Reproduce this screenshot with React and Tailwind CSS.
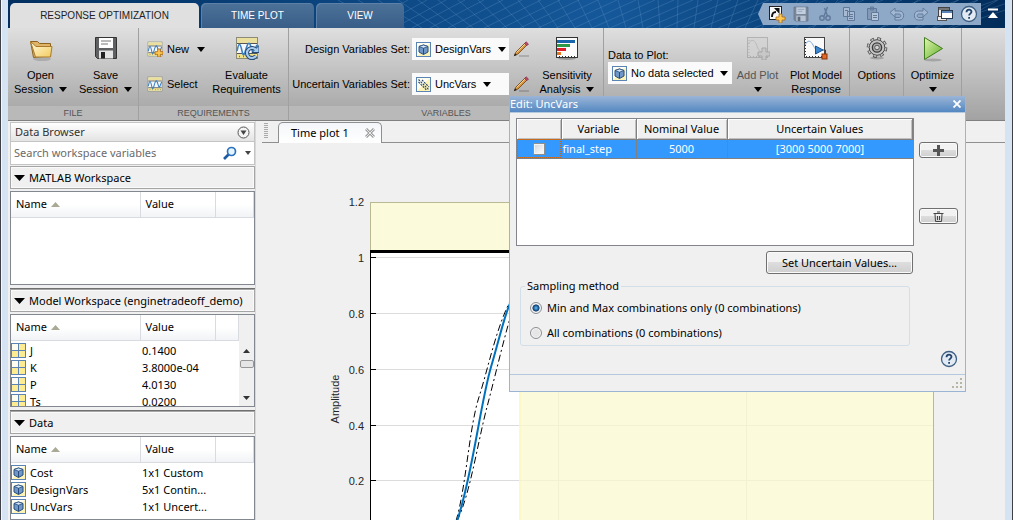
import React, { useState } from "react";

const toolText = "font-['Liberation_Sans',sans-serif] text-[11px] leading-[14px] text-black";

const Caret = ({ className = "" }) => (
  <svg width="8" height="5" viewBox="0 0 8 5" className={`shrink-0 ${className}`}>
    <path d="M0 0h8L4 5z" fill="currentColor" />
  </svg>
);

/* ---------- icons ---------- */

const FolderIcon = () => (
  <svg width="24" height="28" viewBox="0 0 24 28">
    <defs>
      <linearGradient id="folder" x1="0" y1="0" x2="1" y2="1">
        <stop offset="0" stopColor="#fffbe0" />
        <stop offset="1" stopColor="#f3cb5e" />
      </linearGradient>
    </defs>
    <ellipse cx="13" cy="23" rx="9" ry="2" fill="#000" opacity=".15" />
    <path d="M1.500 5.500h7l2 2h11v12l-17 2z" fill="#e0b468" stroke="#8c6420" />
    <path d="M1.500 5.500l5.500 5h16l-1.500 10.500h-15z" fill="url(#folder)" stroke="#a97a2c" />
  </svg>
);

const FloppyIcon = ({ size = 24, faded = false }) => (
  <svg width={size} height={size} viewBox="0 0 24 24" opacity={faded ? 0.45 : 1}>
    <path d="M1.500 1.500h21v21h-19l-2-2z" fill="#5f6062" stroke="#333" />
    <rect x="5" y="2" width="14" height="10" fill="#fff" />
    <path d="M7 5h10M7 8h7" stroke="#777" />
    <rect x="5" y="14.500" width="14" height="8" fill="#e4e4e4" />
    <rect x="7" y="16" width="4" height="6.500" fill="#222" />
  </svg>
);

const WaveBox = ({ size, children }) => (
  <svg width={size} height={size} viewBox="0 0 24 24">
    <rect x="1.500" y="1.500" width="21" height="21" fill="#f4f8fc" stroke="#8b8b78" />
    <rect x="2" y="2" width="20" height="5" fill="#eadf9c" />
    <rect x="2" y="18" width="20" height="4" fill="#f1e38a" />
    <path d="M2 7.500h20M2 17.500h20" stroke="#555" strokeWidth="1.200" />
    <path d="M2 15c2-9 3-9 5 0s3 0 5-5 3-3 5 4 3-2 5-5" fill="none" stroke="#3d7fbf" strokeWidth="1.600" />
    <path d="M4 20.500h1m3 0h1m3 0h1m3 0h1m3 0h1" stroke="#777" strokeWidth="1.500" />
    {children}
  </svg>
);

const NewIcon = () => (
  <WaveBox size={16}>
    <path d="M16 12h4v4h4v4h-4v4h-4v-4h-4v-4h4z" fill="#ffc750" stroke="#a7691c" strokeWidth="1.300" />
  </WaveBox>
);

const EvaluateIcon = () => (
  <WaveBox size={24}>
    <path d="M21 20a5 5 0 1 1 0-6" fill="none" stroke="#274a70" strokeWidth="4.200" />
    <path d="M24 9.500v7h-7z" fill="#a8cdee" stroke="#274a70" />
    <path d="M21 20a5 5 0 1 1 0-6" fill="none" stroke="#a8cdee" strokeWidth="2.200" />
  </WaveBox>
);

const CubeIcon = ({ size = 15 }) => (
  <svg width={size} height={size} viewBox="0 0 15 15" className="shrink-0">
    <rect x=".5" y=".5" width="14" height="14" fill="#fdf3b4" stroke="#5b84b4" />
    <path d="M1 1h13L1 14z" fill="#fffef2" />
    <path d="M3 4.500l4.500-1.500 4.500 1.500v5.500l-4.500 2.500-4.500-2.500z" fill="#6f98c9" stroke="#274c7c" />
    <path d="M3 4.500l4.500 1.700 4.500-1.700-4.500-1.500z" fill="#d5e6f7" stroke="#274c7c" strokeWidth=".8" />
    <path d="M7.500 6.200v6" stroke="#274c7c" />
  </svg>
);

const UncertainIcon = () => (
  <svg width="15" height="15" viewBox="0 0 15 15" className="shrink-0">
    <rect x=".5" y=".5" width="14" height="14" fill="#fdf3b4" stroke="#5b84b4" />
    <path d="M1 1h13L1 14z" fill="#fffef2" />
    <path d="M2.500 5l8 8M2.500 2.500l10 10M6 3l7 7" stroke="#27456e" strokeWidth="1.100" strokeDasharray="2 1" />
  </svg>
);

const MatrixIcon = () => (
  <svg width="15" height="15" viewBox="0 0 15 15" className="shrink-0">
    <rect x=".5" y=".5" width="14" height="14" fill="#fdec92" stroke="#5b84b4" />
    <rect x="1" y="1" width="6" height="6" fill="#fffdf0" />
    <path d="M7.500 1v13M1 7.500h13" stroke="#5b84b4" />
  </svg>
);

const PencilIcon = () => (
  <svg width="17" height="17" viewBox="0 0 17 17">
    <path d="M6 15h10" stroke="#000" strokeWidth="2" opacity=".15" />
    <path d="M1.500 14.500l1.500-3.500 9.500-9.500 2 2-9.500 9.500z" fill="#d9953f" stroke="#6d4413" strokeWidth=".8" />
    <path d="M3.500 11.500l8.500-8.500" stroke="#f7d491" />
    <path d="M11.500 2.500l1.700-1.700 2.300 2.300-1.700 1.700z" fill="#b9486a" stroke="#7c2c45" strokeWidth=".6" />
    <path d="M.8 15.300l1.200-3 1.800 1.800z" fill="#222" />
  </svg>
);

const SensitivityIcon = () => (
  <svg width="24" height="24" viewBox="0 0 24 24">
    <ellipse cx="12" cy="22.500" rx="9" ry="1.500" fill="#000" opacity=".25" />
    <rect x="1.500" y="1.500" width="21" height="20" fill="#fbfbfb" stroke="#333" />
    <rect x="2" y="4" width="18" height="3" fill="#1766ab" />
    <rect x="2" y="8" width="13" height="3" fill="#2c9a45" />
    <rect x="2" y="12" width="9" height="3" fill="#dc1f28" />
    <rect x="2" y="16" width="4" height="3" fill="#e0761f" />
    <path d="M4 20.500h17" stroke="#333" strokeDasharray="1 2" />
  </svg>
);

const AddPlotIcon = () => (
  <svg width="24" height="24" viewBox="0 0 24 24">
    <rect x="1.500" y="1.500" width="20" height="20" fill="#d3d3d3" stroke="#9a9a9a" />
    <path d="M2 8c4-6 7-4 9 2s5 7 9 7" fill="none" stroke="#ababab" />
    <path d="M4 20.500h16M3 4v16" stroke="#999" strokeDasharray="1 2" />
    <path d="M16 12h4v4h4v4h-4v4h-4v-4h-4v-4h4z" fill="#c4c4c4" stroke="#8c8c8c" />
  </svg>
);

const ModelResponseIcon = () => (
  <svg width="26" height="24" viewBox="0 0 26 24">
    <rect x="1.500" y="1.500" width="20" height="20" fill="#fafafa" stroke="#444" />
    <path d="M2 9c3-6 6-4 8 0s3 5 5 5" fill="none" stroke="#7aa8d6" />
    <path d="M3 20.500h18M2.500 3v18" stroke="#333" strokeDasharray="1 2" />
    <path d="M12.500 10l7.500 4-7.500 4z" fill="#3a86cf" stroke="#1c4e86" />
    <path d="M20 14h2.500v5" fill="none" stroke="#444" />
    <rect x="19" y="18" width="5" height="5" fill="#e06b2a" stroke="#8e3208" />
  </svg>
);

const GearIcon = () => (
  <svg width="24" height="24" viewBox="0 0 24 24">
    <ellipse cx="12" cy="22" rx="7" ry="1.500" fill="#000" opacity=".2" />
    <circle cx="12" cy="11.500" r="8.800" fill="none" stroke="#444" strokeWidth="3" strokeDasharray="3.600 3.312" />
    <circle cx="12" cy="11.500" r="7.800" fill="#c4c4c4" stroke="#444" />
    <circle cx="12" cy="11.500" r="8.800" fill="none" stroke="#c4c4c4" strokeWidth="1.600" strokeDasharray="2.400 4.512" strokeDashoffset="-.6" />
    <circle cx="12" cy="11.500" r="4.600" fill="#b0b0b0" stroke="#3c3c3c" strokeWidth="1.400" />
    <circle cx="12" cy="11.500" r="2.300" fill="#d4d4d4" stroke="#555" />
  </svg>
);

const PlayIcon = () => (
  <svg width="24" height="26" viewBox="0 0 24 26">
    <defs>
      <linearGradient id="play" x1="0" y1="0" x2="1" y2="1">
        <stop offset="0" stopColor="#e2f7b0" />
        <stop offset="1" stopColor="#5fae28" />
      </linearGradient>
    </defs>
    <ellipse cx="12" cy="24" rx="9" ry="1.500" fill="#000" opacity=".18" />
    <path d="M3.500 1.500l18 11-18 11z" fill="url(#play)" stroke="#3f7d1b" />
  </svg>
);

const HelpIcon = () => (
  <svg width="18" height="18" viewBox="0 0 18 18">
    <circle cx="9" cy="9" r="7.500" fill="#e2ebf4" stroke="#3f5f82" strokeWidth="1.300" />
    <path
      d="M6.500 7.200c0-3.300 5-3.300 5-.4 0 1.800-2.400 1.900-2.400 3.700M9.100 12v1.800"
      fill="none"
      stroke="#24466c"
      strokeWidth="1.800"
    />
  </svg>
);

const ShortcutIcon = () => (
  <svg width="18" height="18" viewBox="0 0 18 18">
    <rect x="1.500" y="1.500" width="12" height="13" fill="#f8f8f8" stroke="#222" />
    <path d="M4 12c0-4 1-5 4-5" fill="none" stroke="#111" strokeWidth="2" />
    <path d="M6 3h5.500v6z" fill="#111" />
    <path d="M11 9h3v3h3v3h-3v3h-3v-3h-3v-3h3z" fill="#ffc750" stroke="#a7691c" strokeWidth=".8" />
  </svg>
);

const ScissorsIcon = () => (
  <svg width="16" height="16" viewBox="0 0 16 16" fill="none" stroke="#60799b" strokeWidth="1.400">
    <path d="M10.500 1L7 10M7.500 2l3 8" />
    <circle cx="5" cy="12" r="2.200" />
    <circle cx="11" cy="12" r="2.200" />
  </svg>
);

const CopyIcon = () => (
  <svg width="16" height="16" viewBox="0 0 16 16" fill="#a6bad3" stroke="#60799b">
    <path d="M2.500 1.500h6v9h-6zM6.500 5.500h7v9h-7z" />
    <path d="M8 8.500h4M8 10.500h4M8 12.500h4M4 4.500h3" />
  </svg>
);

const PasteIcon = () => (
  <svg width="16" height="16" viewBox="0 0 16 16" fill="#8299b7" stroke="#60799b">
    <path d="M2.500 2.500h9v11h-9zM5.500 1h3v3h-3z" />
    <path d="M6.500 6.500h7v8h-7z" fill="#b4c5da" />
    <path d="M8 9.500h4M8 11.500h4" />
  </svg>
);

const UndoIcon = ({ className = "" }) => (
  <svg width="16" height="16" viewBox="0 0 16 16" className={className}>
    <path d="M1 6.500l5-4.500v3h4.500c5.500 0 5.500 9 0 9H6v-2.500h4c2.500 0 2.500-3.500 0-3.500H6v3z" fill="#a2b7d1" stroke="#637c9e" />
  </svg>
);

const WindowsIcon = () => (
  <svg width="18" height="16" viewBox="0 0 18 16">
    <rect x="2.500" y="1.500" width="11" height="9" fill="#e9e9e9" stroke="#444" />
    <rect x="3" y="2" width="10" height="2" fill="#777" />
    <rect x="1.500" y="10.500" width="9" height="4" fill="#e9e9e9" stroke="#555" />
    <rect x="5.500" y="4.500" width="11" height="8" fill="#fff" stroke="#26384e" />
    <rect x="6" y="5" width="10" height="2" fill="#5c84b4" />
  </svg>
);

const SearchIcon = () => (
  <svg width="14" height="14" viewBox="0 0 14 14" className="shrink-0">
    <path d="M1 13l5-5" stroke="#1c5aa4" strokeWidth="2.600" />
    <circle cx="8.500" cy="5.500" r="4" fill="#e6f4ff" stroke="#2b72bd" strokeWidth="1.700" />
  </svg>
);

/* ---------- title bar ---------- */

const Tab = ({ active, className, children }) => (
  <button
    className={`h-full rounded-t-[5px] font-['Liberation_Sans',sans-serif] text-[10px] ${
      active
        ? "bg-[#e0e0e0] text-[#222]"
        : "bg-linear-to-b from-[#4d7299] to-[#385e88] text-white shadow-[inset_1px_1px_0_#5c80a6]"
    } ${className}`}
  >
    {children}
  </button>
);

const quickTools = [
  ["New shortcut", <ShortcutIcon />],
  ["Save", <FloppyIcon size={16} faded />],
  ["Cut", <ScissorsIcon />],
  ["Copy", <CopyIcon />],
  ["Paste", <PasteIcon />],
  ["Undo", <UndoIcon />],
  ["Redo", <UndoIcon className="-scale-x-100" />],
  ["Switch windows", <WindowsIcon />],
  ["Help", <HelpIcon />],
];

const TitleBar = () => {
  const lines = [];
  for (let i = 0; i < 34; i++) {
    lines.push(`M${380 + i * 17} 28L${330 + i * 20} 0M${350 + i * 18} 28L${400 + i * 19} 0`);
  }

  return (
    <header className="relative flex h-7 shrink-0 items-end bg-linear-to-r from-[#022f60] via-[#15589a] via-60% to-[#022c5a]">
      <svg className="absolute inset-0 h-full w-full" preserveAspectRatio="none" viewBox="0 0 997 28">
        <path d={lines.join("")} stroke="#6f9fd0" strokeWidth=".8" opacity=".35" fill="none" />
      </svg>
      <nav className="relative flex h-[25px] flex-1 gap-0.5 pl-0.5">
        <Tab active className="w-[189px]">
          RESPONSE OPTIMIZATION
        </Tab>
        <Tab className="w-[113px]">TIME PLOT</Tab>
        <Tab className="w-[88px]">VIEW</Tab>
      </nav>
      <div className="relative flex h-full items-center pr-1.5">
        <div className="flex h-[22px] items-center bg-[#8ea8c7] pl-[7px] [clip-path:polygon(0_50%,5px_0,100%_0,100%_100%,5px_100%)]">
          {quickTools.map(([label, icon]) => (
            <button key={label} aria-label={label} className="flex w-6 justify-center">
              {icon}
            </button>
          ))}
        </div>
        <button aria-label="Minimize toolstrip" className="pl-1.5 text-white">
          <svg width="12" height="12" viewBox="0 0 12 12">
            <path d="M1 1.500h10" stroke="#fff" strokeWidth="2" />
            <path d="M6 4l5 6H1z" fill="#fff" />
          </svg>
        </button>
      </div>
    </header>
  );
};

/* ---------- toolstrip ---------- */

const Section = ({ label, className = "", children }) => (
  <div className={`flex shrink-0 flex-col border-r border-[#a0a0a0] ${className}`}>
    <div className="flex h-[78px] items-start">{children}</div>
    <div className="flex h-[14px] items-center justify-center bg-[#b9b9b9] font-['Liberation_Sans',sans-serif] text-[9px] text-[#555]">
      {label}
    </div>
  </div>
);

const ToolButton = ({ icon, lines, caret, muted, className = "" }) => (
  <button className={`flex flex-col items-center pt-2 whitespace-nowrap ${toolText} ${className}`}>
    <span className={`flex h-7 items-start ${muted ? "opacity-60" : ""}`}>{icon}</span>
    <span className="flex flex-col items-center pt-1">
      {lines.map((line, i) => (
        <span key={line} className={`flex items-center gap-1.5 ${muted ? "text-[#555]" : ""}`}>
          {line}
          {caret === "inline" && i === lines.length - 1 && <Caret />}
        </span>
      ))}
      {caret === "below" && (
        <span className="flex h-[14px] items-center">
          <Caret />
        </span>
      )}
    </span>
  </button>
);

const Picker = ({ id, icon, value }) => (
  <div className="flex h-[22px] items-center bg-[#fafafa] pr-1 pl-1">
    {icon}
    <select id={id} className={`appearance-none bg-transparent pr-1.5 pl-1 outline-none ${toolText}`}>
      <option>{value}</option>
    </select>
    <Caret className="pointer-events-none text-black" />
  </div>
);

const Toolstrip = () => (
  <div className="flex shrink-0 overflow-hidden border-b border-[#808080] bg-linear-to-b from-[#dfdfdf] to-[#a2a2a2]">
    <Section label="FILE" className="w-[131px]">
      <ToolButton className="flex-1" icon={<FolderIcon />} lines={["Open", "Session"]} caret="inline" />
      <ToolButton className="flex-1" icon={<FloppyIcon />} lines={["Save", "Session"]} caret="inline" />
    </Section>

    <Section label="REQUIREMENTS" className="w-[150px]">
      <div className="flex flex-col gap-[19px] pt-[13px] pl-2">
        <button className={`flex items-center gap-1 ${toolText}`}>
          <NewIcon /> New <Caret className="ml-1" />
        </button>
        <button className={`flex items-center gap-1 ${toolText}`}>
          <WaveBox size={16} /> Select
        </button>
      </div>
      <ToolButton className="flex-1" icon={<EvaluateIcon />} lines={["Evaluate", "Requirements"]} />
    </Section>

    <Section label="VARIABLES" className="w-[315px]">
      <div className="grid grid-cols-[121px_97px_20px] items-center gap-x-0.5 gap-y-[13px] pt-2.5">
        <label htmlFor="design" className={`text-right whitespace-nowrap ${toolText}`}>
          Design Variables Set:
        </label>
        <Picker id="design" icon={<CubeIcon />} value="DesignVars" />
        <button aria-label="Edit design variables" className="pl-0.5">
          <PencilIcon />
        </button>
        <label htmlFor="uncertain" className={`text-right whitespace-nowrap ${toolText}`}>
          Uncertain Variables Set:
        </label>
        <Picker id="uncertain" icon={<UncertainIcon />} value="UncVars" />
        <button aria-label="Edit uncertain variables" className="pl-0.5">
          <PencilIcon />
        </button>
      </div>
      <ToolButton className="flex-1" icon={<SensitivityIcon />} lines={["Sensitivity", "Analysis"]} caret="inline" />
    </Section>

    <Section label="" className="w-[246px]">
      <div className="pt-5 pl-1">
        <label htmlFor="plotdata" className={`block whitespace-nowrap ${toolText}`}>
          Data to Plot:
        </label>
        <Picker id="plotdata" icon={<CubeIcon />} value="No data selected" />
      </div>
      <ToolButton className="flex-1" icon={<AddPlotIcon />} lines={["Add Plot"]} caret="below" muted />
      <ToolButton className="w-[66px]" icon={<ModelResponseIcon />} lines={["Plot Model", "Response"]} />
    </Section>

    <Section label="" className="w-[54px]">
      <ToolButton className="flex-1" icon={<GearIcon />} lines={["Options"]} />
    </Section>

    <Section label="" className="w-[58px]">
      <ToolButton className="flex-1" icon={<PlayIcon />} lines={["Optimize"]} caret="below" />
    </Section>
  </div>
);

/* ---------- data browser ---------- */

const headCell = "border-r border-b border-[#d8dce0] p-0 text-left font-normal";

const VariableTable = ({ rows, icon, scroll, className = "" }) => (
  <div className={`flex overflow-hidden border border-[#828790] bg-white ${className}`}>
    <div className="min-w-0 flex-1">
      <table className="w-full table-fixed border-collapse">
        <thead>
          <tr className="h-[25px] bg-linear-to-b from-white from-50% to-[#f1f3f6]">
            <th className={`w-[129px] ${headCell}`}>
              <span className="flex items-center gap-1 pl-[5px]">
                Name
                <svg width="9" height="5" viewBox="0 0 9 5">
                  <path d="M0 5h9L4.500 0z" fill="#a9a996" />
                </svg>
              </span>
            </th>
            <th className={`w-[75px] ${headCell}`}>
              <span className="pl-[5px]">Value</span>
            </th>
            <th className={headCell} />
          </tr>
        </thead>
        <tbody className="before:table-row before:h-0.5">
          {rows.map(([name, value]) => (
            <tr key={name} className="h-[17px] leading-[17px]">
              <td className="p-0">
                <span className="flex items-center gap-1">
                  {icon}
                  {name}
                </span>
              </td>
              <td className="p-0 pl-0.5 whitespace-nowrap" colSpan={2}>
                {value}
              </td>
            </tr>
          ))}
        </tbody>
      </table>
    </div>
    {scroll && (
      <div className="flex w-[15px] flex-col items-center bg-[#f0f0f0] pt-[34px] text-[#333]">
        <svg width="7" height="4" viewBox="0 0 7 4">
          <path d="M0 4h7L3.500 0z" fill="currentColor" />
        </svg>
        <span className="mt-[7px] h-2 w-[14px] rounded-xs border border-[#979797] bg-[#e6e6e6]" />
        <svg width="7" height="4" viewBox="0 0 7 4" className="mt-7">
          <path d="M0 0h7L3.500 4z" fill="currentColor" />
        </svg>
      </div>
    )}
  </div>
);

const PanelHeader = ({ children }) => (
  <button className="flex h-[23px] w-full shrink-0 items-center gap-1 border border-[#a5a5a5] pl-[3px] text-left whitespace-nowrap outline outline-[#fafafa] -outline-offset-2">
    <svg width="11" height="6" viewBox="0 0 11 6" className="shrink-0">
      <path d="M0 0h11L5.500 6z" fill="#000" />
    </svg>
    {children}
  </button>
);

const modelRows = [
  ["J", "0.1400"],
  ["K", "3.8000e-04"],
  ["P", "4.0130"],
  ["Ts", "0.0200"],
];

const dataRows = [
  ["Cost", "1x1 Custom"],
  ["DesignVars", "5x1 Contin..."],
  ["UncVars", "1x1 Uncert..."],
];

const DataBrowser = () => (
  <aside className="flex w-[248px] shrink-0 flex-col border-r border-[#d8d8d8] bg-[#f0f0f0] pt-px pl-0.5">
    <div className="flex h-5 shrink-0 items-center justify-between border border-[#c4c4c4] bg-linear-to-b from-white to-[#e4e4e4] px-1 text-[#333]">
      <span>Data Browser</span>
      <button aria-label="Data browser menu">
        <svg width="13" height="13" viewBox="0 0 13 13">
          <circle cx="6.500" cy="6.500" r="5.500" fill="#f4f4f4" stroke="#555" />
          <path d="M3.500 4.500h6l-3 4.500z" fill="#444" />
        </svg>
      </button>
    </div>
    <div className="flex h-[23px] shrink-0 items-center border border-t-0 border-[#c4c4c4] bg-white px-[3px]">
      <input
        aria-label="Search workspace variables"
        placeholder="Search workspace variables"
        className="min-w-0 flex-1 outline-none placeholder:text-[#6a6a6a]"
      />
      <SearchIcon />
      <svg width="6" height="4" viewBox="0 0 6 4" className="ml-2">
        <path d="M0 0h6L3 4z" fill="#444" />
      </svg>
    </div>

    <div className="mt-px flex flex-col gap-0.5">
      <PanelHeader>MATLAB Workspace</PanelHeader>
      <VariableTable rows={[]} className="h-[94px]" />
    </div>
    <div className="mt-[3px] flex flex-col gap-0.5 border-t border-[#707070]">
      <PanelHeader>Model Workspace (enginetradeoff_demo)</PanelHeader>
      <VariableTable rows={modelRows} icon={<MatrixIcon />} scroll className="h-[93px]" />
    </div>
    <div className="mt-[3px] flex flex-1 flex-col gap-0.5 border-t border-[#707070]">
      <PanelHeader>Data</PanelHeader>
      <VariableTable rows={dataRows} icon={<CubeIcon />} className="flex-1" />
    </div>
  </aside>
);

/* ---------- time plot ---------- */

const ticks = [
  [59, "1.2"],
  [115, "1"],
  [171, "0.8"],
  [227, "0.6"],
  [283, "0.4"],
  [338, "0.2"],
];

const TimePlot = () => (
  <svg width="747" height="377" viewBox="0 0 747 377" className="block">
    <rect x="113" y="59" width="562" height="330" fill="#fff" />
    {ticks.slice(1).map(([y]) => (
      <path key={y} d={`M113 ${y - 0.5}H675`} stroke="#dcdcdc" />
    ))}
    <rect x="113" y="59" width="562" height="48" fill="#fbfbdc" />
    <rect x="261" y="115" width="414" height="270" fill="#fbfbdc" />
    <rect x="261" y="115" width="2" height="270" fill="#fcf8c8" />
    <path d="M300.500 115v270M488.500 115v270M261 170.500h414M261 226.500h414M261 282.500h414M261 337.500h414" stroke="#f2f2d2" />
    <path d="M112.500 59.500H675.500V377" fill="none" stroke="#b9b992" />
    <path d="M112.500 59v50" stroke="#b9b992" />
    <path d="M112.500 108v270" stroke="#000" />
    <path d="M112 108.500h563" stroke="#000" strokeWidth="3" />
    {ticks.slice(1).map(([y]) => (
      <path key={y} d={`M113 ${y - 0.5}h5`} stroke="#000" />
    ))}
    <g fontFamily="'Liberation Sans', sans-serif" fontSize="11" fill="#262626">
      {ticks.map(([y, text]) => (
        <text key={text} x="106" y={y + 4} textAnchor="end">
          {text}
        </text>
      ))}
      <text transform="translate(81 256) rotate(-90)" textAnchor="middle">
        Amplitude
      </text>
    </g>
    <g fill="none" stroke="#000" strokeDasharray="7 3 2 3">
      <path d="M198 378C208 345 211 285 221 254S240 175 258 148" />
      <path d="M199 378C212 352 220 298 229 264S247 190 258 155" />
    </g>
    <path d="M199 378C214 335 222 262 233 224S248 165 258 148" fill="none" stroke="#0072bd" strokeWidth="2" />
  </svg>
);

const DocumentArea = () => (
  <main className="flex min-w-0 flex-1 flex-col overflow-hidden bg-[#f0f0f0] pl-0.5">
    <div className="ml-1 flex h-[22px] shrink-0 items-end border-b border-[#8f8f8f]">
      <svg width="4" height="16" viewBox="0 0 4 16" className="mb-[3px] ml-0.5">
        <path d="M0 .5h4M0 2.500h4M0 4.500h4M0 6.500h4M0 8.500h4M0 10.500h4M0 12.500h4M0 14.500h4" stroke="#aaa" />
      </svg>
      <div className="-mb-px ml-2.5 flex h-[21px] w-[104px] items-center justify-between rounded-t-[5px] border border-b-0 border-[#8f8f8f] bg-linear-to-b from-[#f3f6f9] to-white pr-1.5 pl-3">
        <button>Time plot 1</button>
        <button aria-label="Close Time plot 1">
          <svg width="10" height="10" viewBox="0 0 10 10">
            <path d="M1 1l8 8M9 1L1 9" stroke="#a0a0a0" strokeWidth="3" />
            <path d="M1 1l8 8M9 1L1 9" stroke="#e8e8e8" />
          </svg>
        </button>
      </div>
    </div>
    <TimePlot />
  </main>
);

/* ---------- edit dialog ---------- */

const gloss =
  "flex items-center justify-center rounded-[3px] border border-[#707070] bg-linear-to-b from-[#f2f2f2] from-50% via-[#dddddd] via-50% to-[#cfcfcf] shadow-[inset_0_0_0_1px_#fafafa]";

const dialogHead =
  "border-r border-b border-[#808080] bg-[#f0f0f0] p-0 font-normal shadow-[inset_1px_1px_0_#fff,inset_-1px_-1px_0_#c0c0c0]";

const Radio = ({ checked, onChange, children }) => (
  <label className="flex items-center gap-[5px] leading-4">
    <input
      type="radio"
      name="sampling"
      checked={checked}
      onChange={onChange}
      className="size-3 appearance-none rounded-full border border-[#8a8f94] bg-[#e6e6e6] shadow-[inset_0_0_0_1px_#f8f8f8] checked:bg-radial checked:from-[#4ba3dd] checked:from-10% checked:via-[#0f3c6e] checked:via-45% checked:to-[#e6e6e6] checked:to-55%"
    />
    {children}
  </label>
);

const EditDialog = () => {
  const [method, setMethod] = useState("minmax");

  return (
    <div
      role="dialog"
      aria-label="Edit: UncVars"
      className="absolute top-24 left-[509px] w-[457px] border border-t-0 border-[#9ab4d4] bg-[#f0f0f0]"
    >
      <div className="flex h-4 items-center justify-between bg-linear-to-b from-[#9bb5d7] to-[#5488c2] pr-1 text-white">
        <span>Edit: UncVars</span>
        <button aria-label="Close">
          <svg width="8" height="8" viewBox="0 0 8 8">
            <path d="M.5 .5l7 7M7.500 .5l-7 7" stroke="#fff" strokeWidth="1.800" />
          </svg>
        </button>
      </div>

      <div className="border-t border-[#b4c8de] pt-[5px] pr-[7px] pl-1.5">
        <div className="flex gap-[5px]">
          <div className="h-32 flex-1 border border-[#82858c] bg-white">
            <table className="w-full table-fixed border-collapse text-center">
              <thead>
                <tr className="h-5">
                  <th className={`w-11 ${dialogHead}`} />
                  <th className={`w-[75px] ${dialogHead}`}>Variable</th>
                  <th className={`w-[91px] ${dialogHead}`}>Nominal Value</th>
                  <th className={dialogHead}>Uncertain Values</th>
                </tr>
              </thead>
              <tbody>
                <tr className="h-[19px] border-b border-[#808080] bg-[#3399ff] text-white">
                  <td className="border-r border-[#808080] p-0 outline-1 -outline-offset-1 outline-[#c4691c] outline-dotted">
                    <input
                      type="checkbox"
                      aria-label="Select final_step"
                      className="mx-auto block size-3 appearance-none border border-[#8e8f8f] bg-linear-to-br from-[#d0d4d8] to-white shadow-[inset_0_0_0_1px_#f4f4f4]"
                    />
                  </td>
                  <td className="border-r border-[#808080] p-0 pl-px text-left">final_step</td>
                  <td className="border-r border-[#808080] p-0">5000</td>
                  <td className="p-0">[3000 5000 7000]</td>
                </tr>
              </tbody>
            </table>
          </div>
          <div className="flex w-[39px] flex-col gap-[50px] pt-6">
            <button aria-label="Add" className={`h-4 ${gloss}`}>
              <svg width="11" height="11" viewBox="0 0 11 11">
                <path d="M5.500 0v11M0 5.500h11" stroke="#555" strokeWidth="3" />
              </svg>
            </button>
            <button aria-label="Delete" className={`h-4 ${gloss}`}>
              <svg width="11" height="11" viewBox="0 0 11 11" fill="none" stroke="#444">
                <path d="M.5 2.500h10M4 1h3M2 3l.5 7.500h6L9 3M4.500 5v4M6.500 5v4" />
              </svg>
            </button>
          </div>
        </div>

        <div className="mt-[5px] flex justify-end pr-[45px]">
          <button className={`h-[23px] w-[147px] ${gloss}`}>Set Uncertain Values...</button>
        </div>

        <fieldset className="mt-1 mr-12 ml-1 rounded-[3px] border border-[#d3dee8] px-[9px] pb-1">
          <legend className="-ml-[5px] px-0.5 leading-4">Sampling method</legend>
          <div className="flex flex-col gap-[9px] pt-1.5">
            <Radio checked={method === "minmax"} onChange={() => setMethod("minmax")}>
              Min and Max combinations only (0 combinations)
            </Radio>
            <Radio checked={method === "all"} onChange={() => setMethod("all")}>
              All combinations (0 combinations)
            </Radio>
          </div>
        </fieldset>

        <div className="flex justify-end pt-1 pb-1.5">
          <button aria-label="Help">
            <HelpIcon />
          </button>
        </div>
      </div>

      <div className="flex h-[17px] items-end justify-end border-t border-[#b4c8de] p-0.5">
        <svg width="11" height="11" viewBox="0 0 11 11" fill="#b8b5a2">
          <path d="M8 0h2v2H8zM4 4h2v2H4zM8 4h2v2H8zM0 8h2v2H0zM4 8h2v2H4zM8 8h2v2H8z" />
        </svg>
      </div>
    </div>
  );
};

const App = () => {
  return (
    <div className="relative flex h-screen overflow-hidden bg-[#f0f0f0] font-['Noto_Sans',sans-serif] text-[11px] leading-4 text-black">
      <div className="w-2 shrink-0 border-l border-[#404048] bg-[#d6e3f2] shadow-[inset_1px_0_0_#f4f8fc]" />
      <div className="flex min-w-0 flex-1 flex-col">
        <TitleBar />
        <Toolstrip />
        <div className="flex min-h-0 flex-1">
          <DataBrowser />
          <DocumentArea />
        </div>
      </div>
      <div className="w-2 shrink-0 border-r border-[#404048] bg-[#d6e3f2]" />
      <div className="w-px shrink-0 bg-white" />
      <EditDialog />
    </div>
  );
};

export default App;
